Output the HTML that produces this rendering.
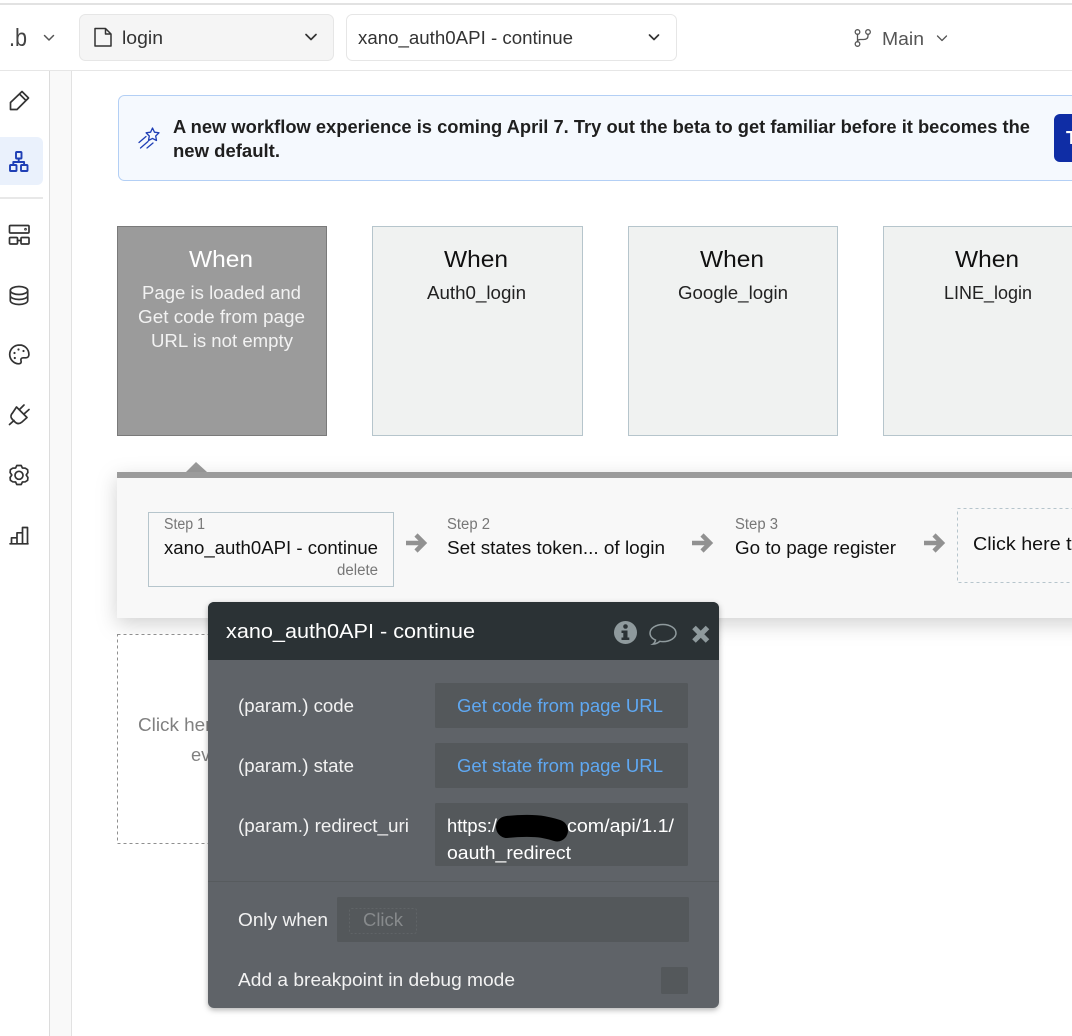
<!DOCTYPE html>
<html lang="en">
<head>
<meta charset="utf-8">
<title>login - workflow</title>
<style>
html,body{margin:0;padding:0;background:#fff;width:1072px;height:1036px;overflow:hidden}
svg{display:block}
text{font-family:"Liberation Sans",Arial,sans-serif;font-size:18.5px;fill:#222}
.i{fill:none;stroke:#333;stroke-width:1.7;stroke-linecap:round;stroke-linejoin:round}
.c{fill:none;stroke:#555;stroke-width:1.5;stroke-linecap:round;stroke-linejoin:round}
.w{fill:#fff}
.g{fill:#777;font-size:15.5px}
</style>
</head>
<body>
<svg width="1072" height="1036" viewBox="0 0 1072 1036" xmlns="http://www.w3.org/2000/svg">
<defs>
<filter id="ps" x="-10%" y="-30%" width="120%" height="170%"><feDropShadow dx="0" dy="6" stdDeviation="10" flood-color="#000" flood-opacity=".18"/></filter>
<filter id="pp" x="-10%" y="-10%" width="120%" height="120%"><feDropShadow dx="0" dy="2" stdDeviation="3" flood-color="#000" flood-opacity=".3"/></filter>
</defs>
<rect width="1072" height="1036" fill="#fff"/>

<!-- top bar -->
<rect x="0" y="3" width="1072" height="2" fill="#e2e2e2"/>
<rect x="0" y="70" width="1072" height="1" fill="#e6e6e6"/>
<text x="9" y="46" textLength="18" lengthAdjust="spacingAndGlyphs" style="font-size:25px;fill:#444">.b</text>
<path class="c" d="M44.500 35.500l4.500 4.500 4.500-4.500"/>
<rect x="79.500" y="14.500" width="254" height="46" rx="6" fill="#f5f5f5" stroke="#e6e6e6"/>
<path class="i" d="M95 28.500h10.500l5.500 5.500v12h-16zM105.500 28.500v5.500h5.500" style="stroke-width:1.500"/>
<text x="122" y="44" textLength="41" lengthAdjust="spacingAndGlyphs" style="fill:#333">login</text>
<path class="i" d="M306 34.500l5 5 5-5"/>
<rect x="346.500" y="14.500" width="330" height="46" rx="6" fill="#fff" stroke="#e6e6e6"/>
<text x="358" y="44" textLength="215" lengthAdjust="spacingAndGlyphs" style="fill:#333">xano_auth0API - continue</text>
<path class="i" d="M649.500 35l4.500 4.500 4.500-4.500"/>
<g class="c" style="stroke-width:1.300">
<circle cx="857.500" cy="32" r="2.300"/><circle cx="857.500" cy="44" r="2.300"/><circle cx="868" cy="32" r="2.300"/>
<path d="M857.500 34.300v7.400M868 34.300v1.700c0 2.500-2 3.500-4.500 3.500h-3c-1.500 0-3 .5-3 2"/>
</g>
<text x="882" y="45" textLength="42" lengthAdjust="spacingAndGlyphs" style="fill:#555">Main</text>
<path class="c" d="M937.500 36l4.500 4.500 4.500-4.500" style="stroke-width:1.300"/>

<!-- sidebar -->
<rect x="49" y="71" width="1" height="965" fill="#dcdcdc"/>
<rect x="50" y="71" width="21" height="965" fill="#f9f9f9"/>
<rect x="71" y="71" width="1" height="965" fill="#e2e2e2"/>
<path d="M0 137h37a6 6 0 0 1 6 6v36a6 6 0 0 1-6 6H0z" fill="#eaf1fc"/>
<rect x="0" y="197" width="43" height="2" fill="#e8e8e8"/>

<path class="i" d="M10.500 102.500L22 91.500l6.500 6.500-11.500 11.500-6.500 0zM19.500 94l6.500 6.500"/>
<g class="i" style="stroke:#1f3fb5;stroke-width:1.900">
<rect x="16" y="152" width="5.500" height="6.500" rx=".8"/><rect x="10" y="165" width="6.500" height="6" rx=".8"/><rect x="21" y="165" width="6.500" height="6" rx=".8"/>
<path d="M18.700 158.500v3.500M13.300 165v-3h10.800v3"/>
</g>
<g class="i">
<rect x="9.500" y="225.500" width="19.500" height="7.500" rx="1"/><rect x="9.500" y="237.500" width="8" height="6.500" rx="1"/><rect x="21" y="237.500" width="8" height="6.500" rx="1"/>
<path d="M17.500 240.500H21"/>
<circle cx="25.500" cy="229.200" r=".5"/>
</g>
<g class="i">
<ellipse cx="19" cy="290.500" rx="8.700" ry="4"/>
<path d="M10.300 290.500v10c0 2.300 3.900 4 8.700 4s8.700-1.700 8.700-4v-10M10.300 295.500c0 2.300 3.900 4 8.700 4s8.700-1.700 8.700-4"/>
</g>
<g class="i">
<path d="M19.500 345c-5.500 0-9.800 4.200-9.800 9.500 0 5 4.200 9.300 9 9.300 2.300 0 2.800-1.600 2.300-3-.5-1.500.3-3 2-3h3c1.800 0 2.900-1.400 2.900-3.300 0-5.500-4.300-9.500-9.400-9.500z"/>
</g>
<g fill="#333"><circle cx="14.500" cy="353" r="1.100"/><circle cx="14.800" cy="358" r="1.100"/><circle cx="18.500" cy="349.500" r="1.100"/><circle cx="23.500" cy="351" r="1.100"/></g>
<g class="i">
<path d="M16.500 407L27 417.500L22 422c-2.500 2-5 2-7 0l-2.500-2.500c-2-2-2-4.500 0-6.500zM19.500 409.500L24 405M24 414l5-4.500M14 420.500L9.500 424.500"/>
</g>
<g class="i">
<path d="M16.800 465.500h4.400l1.200 2.500 2.900.2 2.300 1.500 .3 2.800-1.700 2.500 1.700 2.500-.3 2.800-2.300 1.500-2.900.2-1.200 2.500h-4.400l-1.200-2.500-2.900-.2-2.300-1.500-.3-2.800 1.700-2.500-1.700-2.500.3-2.800 2.300-1.500 2.900-.2z"/>
<circle cx="19" cy="475.300" r="4"/>
</g>
<g class="i">
<path d="M10 543.800h18M11.500 543.800v-6h5.500v6M17 543.800v-11h5.500v11M22.500 543.800v-16.300h5v16.300"/>
</g>

<!-- banner -->
<rect x="118.500" y="95.500" width="1000" height="85" rx="6" fill="#f5f9fe" stroke="#b3cff5"/>
<g fill="none" stroke="#1f3fb5" stroke-width="1.300" stroke-linecap="round" stroke-linejoin="round">
<path d="M152.500 128l2 4.200 4.500.6-3.300 3.200.8 4.500-4-2.100-4 2.100.8-4.500-3.200-3.200 4.500-.6z"/>
<path d="M139 142.500l7-6M140.500 148l7.500-6.500M147 148l6-5"/>
</g>
<text x="173" y="133" textLength="857" lengthAdjust="spacingAndGlyphs" style="font-weight:700;font-size:18px;fill:#1f1f1f">A new workflow experience is coming April 7. Try out the beta to get familiar before it becomes the</text>
<text x="173" y="157" textLength="107" lengthAdjust="spacingAndGlyphs" style="font-weight:700;font-size:18px;fill:#1f1f1f">new default.</text>
<rect x="1054" y="114" width="60" height="48" rx="6" fill="#0f2da5"/>
<text x="1066" y="144" style="font-weight:700;font-size:18px;fill:#fff">Try</text>

<!-- cards -->
<rect x="117.500" y="226.500" width="209" height="209" fill="#9b9b9b" stroke="#7a7a7a"/>
<rect x="372.500" y="226.500" width="210" height="209" fill="#f0f2f1" stroke="#b6c5cc"/>
<rect x="628.500" y="226.500" width="209" height="209" fill="#f0f2f1" stroke="#b6c5cc"/>
<rect x="883.500" y="226.500" width="209" height="209" fill="#f0f2f1" stroke="#b6c5cc"/>
<g>
<text class="w" x="189" y="267" textLength="64" lengthAdjust="spacingAndGlyphs" style="font-size:23px">When</text>
<text x="444" y="267" textLength="64" lengthAdjust="spacingAndGlyphs" style="font-size:23px;fill:#111">When</text>
<text x="700" y="267" textLength="64" lengthAdjust="spacingAndGlyphs" style="font-size:23px;fill:#111">When</text>
<text x="955" y="267" textLength="64" lengthAdjust="spacingAndGlyphs" style="font-size:23px;fill:#111">When</text>
</g>
<g>
<text x="142" y="299" textLength="159" lengthAdjust="spacingAndGlyphs" style="fill:#f2f2f2">Page is loaded and</text>
<text x="138" y="323" textLength="167" lengthAdjust="spacingAndGlyphs" style="fill:#f2f2f2">Get code from page</text>
<text x="151" y="347" textLength="142" lengthAdjust="spacingAndGlyphs" style="fill:#f2f2f2">URL is not empty</text>
<text x="427" y="299" textLength="99" lengthAdjust="spacingAndGlyphs">Auth0_login</text>
<text x="678" y="299" textLength="110" lengthAdjust="spacingAndGlyphs">Google_login</text>
<text x="944" y="299" textLength="88" lengthAdjust="spacingAndGlyphs">LINE_login</text>
</g>

<!-- workflow panel -->
<path d="M186 472l10-10 11 10z" fill="#9b9b9b"/>
<rect x="117" y="472" width="1000" height="146" fill="#f8f8f8" filter="url(#ps)"/>
<rect x="117" y="472" width="1000" height="6" fill="#9b9b9b"/>
<rect x="148.500" y="512.500" width="245" height="74" fill="#f8f8f8" stroke="#b6c5cc"/>
<text class="g" x="164" y="529" textLength="41" lengthAdjust="spacingAndGlyphs">Step 1</text>
<text x="164" y="554" textLength="214" lengthAdjust="spacingAndGlyphs" style="fill:#111">xano_auth0API - continue</text>
<text class="g" x="337" y="575" textLength="41" lengthAdjust="spacingAndGlyphs">delete</text>
<text class="g" x="447" y="529" textLength="43" lengthAdjust="spacingAndGlyphs">Step 2</text>
<text x="447" y="554" textLength="218" lengthAdjust="spacingAndGlyphs" style="fill:#111">Set states token... of login</text>
<text class="g" x="735" y="529" textLength="43" lengthAdjust="spacingAndGlyphs">Step 3</text>
<text x="735" y="554" textLength="161" lengthAdjust="spacingAndGlyphs" style="fill:#111">Go to page register</text>
<g fill="none" stroke="#919191" stroke-width="4.500" stroke-linejoin="miter">
<path d="M406 543h17M416 535l8 8-8 8"/>
<path d="M692 543h17M702 535l8 8-8 8"/>
<path d="M924 543h17M934 535l8 8-8 8"/>
</g>
<rect x="957.500" y="508.500" width="160" height="74" fill="none" stroke="#b6c5cc" stroke-dasharray="3 3"/>
<text x="973" y="550" textLength="148" lengthAdjust="spacingAndGlyphs" style="fill:#111">Click here to add</text>

<!-- add event box -->
<rect x="117.500" y="634.500" width="209" height="209" fill="#fff" stroke="#8f8f8f" stroke-dasharray="3 3"/>
<text x="138" y="731" textLength="168" lengthAdjust="spacingAndGlyphs" style="fill:#808080">Click here to add an</text>
<text x="191" y="761" textLength="60" lengthAdjust="spacingAndGlyphs" style="fill:#808080">event...</text>

<!-- popup -->
<rect x="208" y="602" width="511" height="406" rx="6" fill="#5f6468" filter="url(#pp)"/>
<path d="M208 660v-52a6 6 0 0 1 6-6h499a6 6 0 0 1 6 6v52z" fill="#2b3235"/>
<text class="w" x="226" y="638" textLength="249" lengthAdjust="spacingAndGlyphs" style="font-size:20.500px">xano_auth0API - continue</text>
<circle cx="625.500" cy="632.500" r="11.500" fill="#8f9a9d"/>
<g fill="#2b3235"><circle cx="625.500" cy="626.500" r="2.300"/><path d="M621.500 630.500h6v7h1.800v2.500h-7.800v-2.500h1.800v-4.500h-1.800z"/></g>
<path d="M663 624.500c-7.200 0-13 3.800-13 8.600 0 3 2.200 5.500 5.500 7-.3 1.500-1 3-2.500 4 2.800-.2 5.200-1.300 6.800-2.800 1 .2 2.100.3 3.200.3 7.200 0 13-3.800 13-8.500s-5.800-8.600-13-8.600z" fill="none" stroke="#8f9a9d" stroke-width="1.500"/>
<path d="M694 627.500l13.500 13.500M707.500 627.500L694 641" stroke="#8f9a9d" stroke-width="5" fill="none"/>

<text class="w" x="238" y="712" textLength="116" lengthAdjust="spacingAndGlyphs" style="fill:#f2f2f2">(param.) code</text>
<rect x="435" y="683" width="253" height="45" rx="1.500" fill="#54585b"/>
<text x="457" y="712" textLength="206" lengthAdjust="spacingAndGlyphs" style="fill:#5fa8f2">Get code from page URL</text>
<text class="w" x="238" y="772" textLength="116" lengthAdjust="spacingAndGlyphs" style="fill:#f2f2f2">(param.) state</text>
<rect x="435" y="743" width="253" height="45" rx="1.500" fill="#54585b"/>
<text x="457" y="772" textLength="206" lengthAdjust="spacingAndGlyphs" style="fill:#5fa8f2">Get state from page URL</text>
<text class="w" x="238" y="832" textLength="171" lengthAdjust="spacingAndGlyphs" style="fill:#f2f2f2">(param.) redirect_uri</text>
<rect x="435" y="803" width="253" height="63" rx="1.500" fill="#54585b"/>
<text class="w" x="447" y="832" textLength="50" lengthAdjust="spacingAndGlyphs">https:/</text>
<text class="w" x="567" y="832" textLength="107" lengthAdjust="spacingAndGlyphs">com/api/1.1/</text>
<text class="w" x="447" y="859" textLength="124" lengthAdjust="spacingAndGlyphs">oauth_redirect</text>
<path d="M507 827c13-1.500 28-1.500 36 0 5 1 10 2 14 3.500" fill="none" stroke="#000" stroke-width="22" stroke-linecap="round"/>

<rect x="208" y="881" width="511" height="1" fill="#575b5e"/>
<text class="w" x="238" y="926" textLength="90" lengthAdjust="spacingAndGlyphs" style="fill:#f2f2f2">Only when</text>
<rect x="337" y="897" width="352" height="45" rx="1.500" fill="#54585b"/>
<rect x="349.500" y="908.500" width="67" height="25" rx="2" fill="none" stroke="#606467" stroke-dasharray="2 2"/>
<text x="363" y="926" textLength="40" lengthAdjust="spacingAndGlyphs" style="fill:#878a8c">Click</text>
<text class="w" x="238" y="986" textLength="277" lengthAdjust="spacingAndGlyphs" style="fill:#f2f2f2">Add a breakpoint in debug mode</text>
<rect x="661" y="967" width="27" height="27" rx="1.500" fill="#54585b"/>
</svg>
</body>
</html>
